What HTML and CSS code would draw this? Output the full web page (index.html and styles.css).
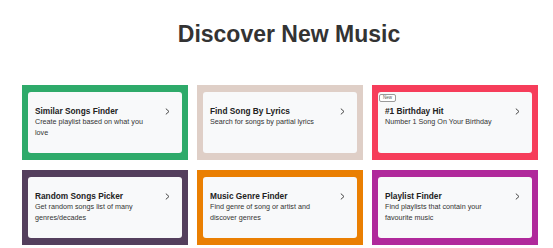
FILE: index.html
```html
<!DOCTYPE html>
<html lang="en">
<head>
<meta charset="utf-8">
<title>Discover New Music</title>
<link rel="stylesheet" href="styles.css">
</head>
<body>
<main class="page">
  <h1 class="page-title">Discover New Music</h1>
  <section class="tools">
    <a class="tool tool-green" href="#">
      <div class="tool-inner">
        <div class="tool-text">
          <div class="tool-name">Similar Songs Finder</div>
          <div class="tool-desc">Create playlist based on what you love</div>
        </div>
        <svg class="chev" viewBox="0 0 5 7" width="5" height="7"><polyline points="0.8,0.6 4,3.5 0.8,6.4" fill="none" stroke="#444" stroke-width="1"/></svg>
      </div>
    </a>
    <a class="tool tool-beige" href="#">
      <div class="tool-inner">
        <div class="tool-text">
          <div class="tool-name">Find Song By Lyrics</div>
          <div class="tool-desc">Search for songs by partial lyrics</div>
        </div>
        <svg class="chev" viewBox="0 0 5 7" width="5" height="7"><polyline points="0.8,0.6 4,3.5 0.8,6.4" fill="none" stroke="#444" stroke-width="1"/></svg>
      </div>
    </a>
    <a class="tool tool-red" href="#">
      <div class="tool-inner">
        <span class="badge">New</span>
        <div class="tool-text">
          <div class="tool-name">#1 Birthday Hit</div>
          <div class="tool-desc">Number 1 Song On Your Birthday</div>
        </div>
        <svg class="chev" viewBox="0 0 5 7" width="5" height="7"><polyline points="0.8,0.6 4,3.5 0.8,6.4" fill="none" stroke="#444" stroke-width="1"/></svg>
      </div>
    </a>
    <a class="tool tool-purple" href="#">
      <div class="tool-inner">
        <div class="tool-text">
          <div class="tool-name">Random Songs Picker</div>
          <div class="tool-desc">Get random songs list of many genres/decades</div>
        </div>
        <svg class="chev" viewBox="0 0 5 7" width="5" height="7"><polyline points="0.8,0.6 4,3.5 0.8,6.4" fill="none" stroke="#444" stroke-width="1"/></svg>
      </div>
    </a>
    <a class="tool tool-orange" href="#">
      <div class="tool-inner">
        <div class="tool-text">
          <div class="tool-name">Music Genre Finder</div>
          <div class="tool-desc">Find genre of song or artist and discover genres</div>
        </div>
        <svg class="chev" viewBox="0 0 5 7" width="5" height="7"><polyline points="0.8,0.6 4,3.5 0.8,6.4" fill="none" stroke="#444" stroke-width="1"/></svg>
      </div>
    </a>
    <a class="tool tool-magenta" href="#">
      <div class="tool-inner">
        <div class="tool-text">
          <div class="tool-name">Playlist Finder</div>
          <div class="tool-desc">Find playlists that contain your favourite music</div>
        </div>
        <svg class="chev" viewBox="0 0 5 7" width="5" height="7"><polyline points="0.8,0.6 4,3.5 0.8,6.4" fill="none" stroke="#444" stroke-width="1"/></svg>
      </div>
    </a>
  </section>
</main>
</body>
</html>
```
FILE: styles.css
```css
* { box-sizing: border-box; }
html, body {
  margin: 0;
  padding: 0;
  background: #ffffff;
  font-family: "Liberation Sans", Arial, sans-serif;
  color: #222;
}
.page {
  padding-top: 21px;
}
.page-title {
  margin: 0;
  padding-left: 25px;
  text-align: center;
  font-size: 23px;
  line-height: 26px;
  font-weight: bold;
  color: #333;
}
.tools {
  margin: 38px 0 0 22px;
  width: 516px;
  display: grid;
  grid-template-columns: repeat(3, 1fr);
  grid-auto-rows: 75px;
  column-gap: 9px;
  row-gap: 10px;
}
.tool {
  display: block;
  padding: 7px 6px 7px 6px;
  text-decoration: none;
  color: inherit;
}
.tool-green { background: #2eaa6a; }
.tool-beige { background: #dfcfc7; }
.tool-red { background: #f63d5a; }
.tool-purple { background: #543f5d; }
.tool-orange { background: #ea7f02; }
.tool-magenta { background: #b0299b; }
.tool-inner {
  position: relative;
  height: 100%;
  background: #f8f9fa;
  border-radius: 3px;
  padding: 13px 12px 0 7px;
  display: flex;
  align-items: flex-start;
  gap: 12px;
}
.tool-text {
  flex: 1;
  min-width: 0;
}
.tool-name {
  font-size: 8.3px;
  line-height: 12px;
  font-weight: bold;
  color: #222;
}
.tool-desc {
  font-size: 7.2px;
  line-height: 10.7px;
  color: #333;
}
.chev {
  flex: none;
  margin-top: 3px;
}
.badge {
  position: absolute;
  left: 1px;
  top: 2px;
  width: 17px;
  height: 8px;
  border: 1px solid #9a9a9a;
  border-radius: 2px;
  background: #fff;
  font-size: 4.5px;
  line-height: 6px;
  text-align: center;
  color: #555;
}
```
